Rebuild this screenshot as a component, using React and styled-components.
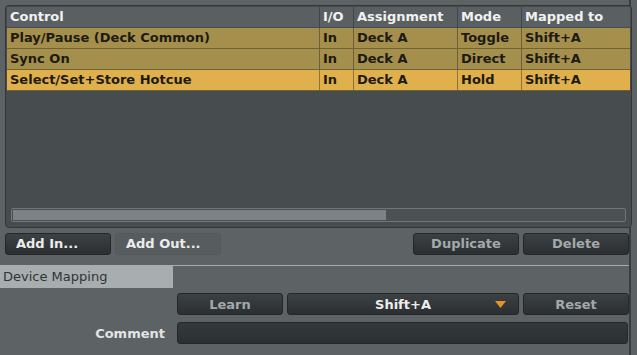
import React from "react";
import styled, { createGlobalStyle } from "styled-components";

const GlobalStyle = createGlobalStyle`
  html, body {
    margin: 0;
    padding: 0;
    background: #5d6264;
  }
  body {
    font-family: "DejaVu Sans", "Liberation Sans", Arial, sans-serif;
  }
`;

const Page = styled.div`
  width: 637px;
  height: 355px;
  display: flex;
  background: #5d6264;
  overflow: hidden;
`;

const Main = styled.div`
  width: 631px;
  border-right: 2px solid #383c3e;
  display: flex;
  flex-direction: column;
  padding-top: 5px;
  box-sizing: border-box;
`;

const Panel = styled.div`
  margin-left: 5px;
  width: 627px;
  height: 223px;
  box-sizing: border-box;
  background: #474c4f;
  border: 1px solid #33373a;
  border-radius: 4px;
  padding: 1px;
  display: flex;
  flex-direction: column;
`;

const Row = styled.div`
  display: grid;
  grid-template-columns: 312px 34px 104px 64px 1fr;
  height: 21px;
  box-sizing: border-box;
  background: ${(p) => (p.$header ? "#5a5f62" : p.$selected ? "#dfb04c" : "#a48f4d")};
  color: ${(p) => (p.$header ? "#f1f1f1" : "#1d1a12")};
  border-bottom: 1px solid ${(p) => (p.$header ? "#474c4f" : "#6f6235")};
  font-size: 13px;
  font-weight: bold;
  line-height: 20px;
`;

const Cell = styled.div`
  padding-left: 3px;
  white-space: nowrap;
  overflow: hidden;
  border-left: ${(p) => (p.$first ? "none" : "1px solid rgba(40, 40, 40, 0.45)")};
`;

const Spacer = styled.div`
  flex: 1;
`;

const Scrollbar = styled.div`
  margin: 0 4px 4px 4px;
  height: 14px;
  box-sizing: border-box;
  border: 1px solid #6f7578;
  border-radius: 2px;
  background: #4c5154;
  display: flex;
  padding: 1px;
`;

const Thumb = styled.div`
  background: #7c8285;
  height: 100%;
`;

const ButtonRow = styled.div`
  display: flex;
  align-items: center;
  gap: 4px;
  padding: 5px 0 0 5px;
  height: 21px;
`;

const Button = styled.div`
  width: ${(p) => p.$w || 106}px;
  height: 22px;
  box-sizing: border-box;
  border-radius: 3px;
  display: flex;
  align-items: center;
  justify-content: ${(p) => (p.$left ? "flex-start" : "center")};
  padding-left: ${(p) => (p.$left ? "10px" : "0")};
  font-size: 13px;
  font-weight: bold;
  color: ${(p) => (p.$bright ? "#ececec" : "#a3a9ab")};
  background: ${(p) => (p.$flat ? "#575c5f" : "linear-gradient(#3c4144, #2b2f31)")};
  border: 1px solid ${(p) => (p.$flat ? "#555a5c" : "#24272a")};
  position: relative;
`;

const Arrow = styled.svg`
  position: absolute;
  right: 12px;
  top: 7px;
`;

const Gap = styled.div`
  flex: 1;
`;

const SectionHeader = styled.div`
  margin-top: 11px;
  display: flex;
  align-items: flex-start;
  height: 23px;
`;

const Tab = styled.div`
  width: 173px;
  height: 23px;
  background: #a8aeb0;
  color: #2f3436;
  font-size: 13px;
  line-height: 23px;
  padding-left: 3px;
  box-sizing: border-box;
`;

const TabLine = styled.div`
  flex: 1;
  height: 1px;
  background: #a8aeb0;
`;

const FormRow = styled.div`
  display: flex;
  align-items: center;
  gap: 4px;
  margin-top: ${(p) => p.$mt || 0}px;
  padding-left: 177px;
  position: relative;
`;

const Label = styled.div`
  position: absolute;
  right: 464px;
  font-size: 13px;
  font-weight: bold;
  color: #e2e4e5;
`;

const Input = styled.div`
  width: 451px;
  height: 22px;
  box-sizing: border-box;
  border-radius: 3px;
  background: linear-gradient(#34393b, #2c3032);
  border: 1px solid #25282a;
`;

const rows = [
  ["Play/Pause (Deck Common)", "In", "Deck A", "Toggle", "Shift+A"],
  ["Sync On", "In", "Deck A", "Direct", "Shift+A"],
  ["Select/Set+Store Hotcue", "In", "Deck A", "Hold", "Shift+A", true],
];

export default function App() {
  return (
    <Page>
      <GlobalStyle />
      <Main>
        <Panel>
          <Row $header>
            {["Control", "I/O", "Assignment", "Mode", "Mapped to"].map((h, i) => (
              <Cell key={h} $first={i === 0}>{h}</Cell>
            ))}
          </Row>
          {rows.map((r) => (
            <Row key={r[0]} $selected={r[5]}>
              {r.slice(0, 5).map((c, i) => (
                <Cell key={i} $first={i === 0}>{c}</Cell>
              ))}
            </Row>
          ))}
          <Spacer />
          <Scrollbar>
            <Thumb style={{ width: "61%" }} />
          </Scrollbar>
        </Panel>

        <ButtonRow>
          <Button $left $bright>Add In...</Button>
          <Button $left $bright $flat>Add Out...</Button>
          <Gap />
          <Button>Duplicate</Button>
          <Button>Delete</Button>
        </ButtonRow>

        <SectionHeader>
          <Tab>Device Mapping</Tab>
          <TabLine />
        </SectionHeader>

        <FormRow $mt={5}>
          <Button>Learn</Button>
          <Button $w={232} $bright>
            Shift+A
            <Arrow width="11" height="8" viewBox="0 0 11 8">
              <polygon points="0,0 11,0 5.5,7" fill="#e8902a" />
            </Arrow>
          </Button>
          <Button>Reset</Button>
        </FormRow>

        <FormRow $mt={7}>
          <Label>Comment</Label>
          <Input />
        </FormRow>
      </Main>
    </Page>
  );
}
